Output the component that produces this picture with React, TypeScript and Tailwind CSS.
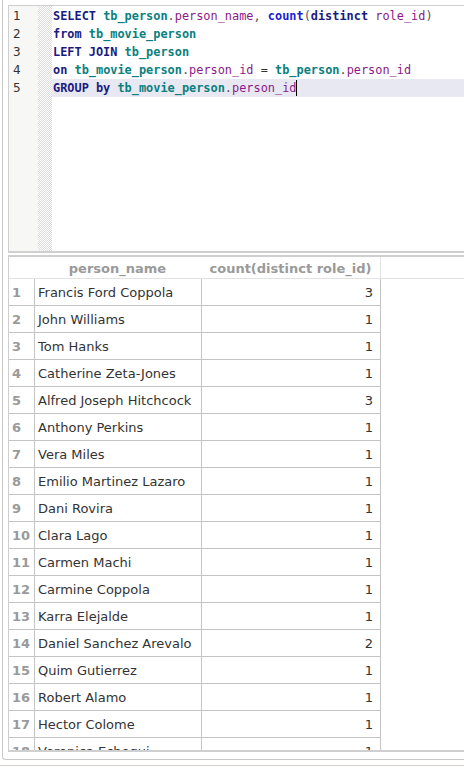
import React from "react";

const rows: [string, number][] = [
  ["Francis Ford Coppola", 3],
  ["John Williams", 1],
  ["Tom Hanks", 1],
  ["Catherine Zeta-Jones", 1],
  ["Alfred Joseph Hitchcock", 3],
  ["Anthony Perkins", 1],
  ["Vera Miles", 1],
  ["Emilio Martinez Lazaro", 1],
  ["Dani Rovira", 1],
  ["Clara Lago", 1],
  ["Carmen Machi", 1],
  ["Carmine Coppola", 1],
  ["Karra Elejalde", 1],
  ["Daniel Sanchez Arevalo", 2],
  ["Quim Gutierrez", 1],
  ["Robert Alamo", 1],
  ["Hector Colome", 1],
  ["Veronica Echegui", 1],
];

const K = ({ c }: { c: string }) => <span className="font-bold text-[#1a1a80]">{c}</span>;
const T = ({ c }: { c: string }) => <span className="font-bold text-[#0a8080]">{c}</span>;
const F = ({ c }: { c: string }) => <span className="text-[#8a1a8a]">{c}</span>;
const P = ({ c }: { c: string }) => <span className="text-[#555]">{c}</span>;

export default function App() {
  const code = [
    <>
      <K c="SELECT" /> <T c="tb_person" />
      <P c="." />
      <F c="person_name" />
      <P c="," /> <span className="font-bold text-[#1c1cd4]">count</span>
      <P c="(" />
      <K c="distinct" /> <F c="role_id" />
      <P c=")" />
    </>,
    <>
      <K c="from" /> <T c="tb_movie_person" />
    </>,
    <>
      <K c="LEFT JOIN" /> <T c="tb_person" />
    </>,
    <>
      <K c="on" /> <T c="tb_movie_person" />
      <P c="." />
      <F c="person_id" /> <span className="text-[#333]">=</span> <T c="tb_person" />
      <P c="." />
      <F c="person_id" />
    </>,
    <>
      <K c="GROUP by" /> <T c="tb_movie_person" />
      <P c="." />
      <F c="person_id" />
      <span className="inline-block w-[1px] h-[16px] bg-black align-middle -mt-[2px]" />
    </>,
  ];

  return (
    <div className="w-[464px] h-[768px] overflow-hidden bg-white" style={{ fontFamily: "'DejaVu Sans', sans-serif" }}>
      <div className="ml-[2px] h-[760px] border-l border-b border-[#c8c8c8] rounded-bl-[4px] pl-[5px] pt-[5px] flex flex-col">
        {/* Editor */}
        <div className="h-[248px] border-t border-l border-b-2 border-[#cfcfcf] flex shrink-0">
          <div className="w-[29px] bg-[#f7f7f5] pt-[1px] pl-[4px] text-[12px] text-[#333]">
            {[1, 2, 3, 4, 5].map((n) => (
              <div key={n} className="h-[18px] leading-[18px]">{n}</div>
            ))}
          </div>
          <div className="w-[14px] bg-[repeating-conic-gradient(#dcdcdc_0_25%,#ffffff_0_50%)] bg-[length:2px_2px]" />
          <div className="flex-1 pt-[1px] text-[11.9px]" style={{ fontFamily: "'DejaVu Sans Mono', monospace" }}>
            {code.map((l, i) => (
              <div key={i} className={`h-[18px] leading-[18px] pl-[1px] whitespace-pre ${i === 4 ? "bg-[#e8e8f2]" : ""}`}>
                {l}
              </div>
            ))}
          </div>
        </div>
        {/* Table */}
        <div className="mt-[2px] h-[497px] border-t-2 border-l border-b-2 border-[#cfcfcf] overflow-hidden shrink-0">
          <div className="flex h-[22px] border-b border-[#e2e2e2] text-[13px] font-bold text-[#9a9a9a] leading-[23px]">
            <div className="w-[25px]" />
            <div className="w-[167px] text-center">person_name</div>
            <div className="w-[180px] text-center border-r border-[#e2e2e2]">count(distinct role_id)</div>
          </div>
          {rows.map(([name, c], i) => (
            <div key={i} className="flex h-[27px] text-[13px] leading-[28px]">
              <div className="w-[25px] pl-[3px] font-bold text-[#9a9a9a] border-b border-[#c4c4c4]">{i + 1}</div>
              <div className="w-[167px] pl-[3px] text-[#333] border-l border-b border-[#c4c4c4]">{name}</div>
              <div className="w-[180px] pr-[7px] text-right text-[#333] border-l border-r border-b border-[#c4c4c4]">{c}</div>
            </div>
          ))}
        </div>
      </div>
      <div className="mt-[5px] border-t border-[#d6d0cc]" />
    </div>
  );
}
